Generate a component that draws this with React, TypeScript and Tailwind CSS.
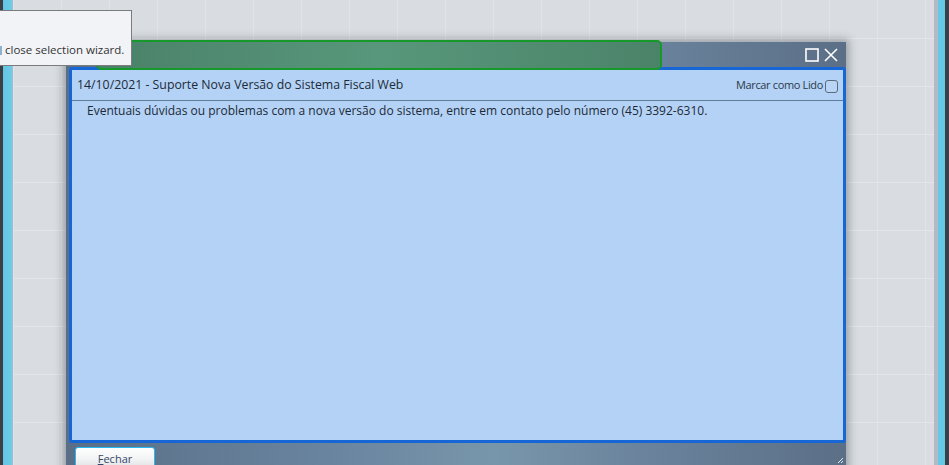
import React from "react";

function TitleIcons() {
  return (
    <div className="flex items-center gap-[5px] pr-[8px]">
      <svg width="14" height="14" viewBox="0 0 14 14" fill="none">
        <rect x="1" y="1" width="12" height="12" stroke="#ffffff" strokeWidth="1.6" />
      </svg>
      <svg width="14" height="14" viewBox="0 0 14 14" fill="none">
        <path d="M1 1 L13 13 M13 1 L1 13" stroke="#ffffff" strokeWidth="1.6" />
      </svg>
    </div>
  );
}

function ResizeGrip() {
  return (
    <svg className="absolute right-[2px] bottom-[1px]" width="8" height="8" viewBox="0 0 8 8">
      <path d="M7 2 L2 7 M7 5 L5 7" stroke="#e8eef4" strokeWidth="1" />
    </svg>
  );
}

export default function App() {
  return (
    <div className="relative w-[949px] h-[465px] overflow-hidden flex font-['Open_Sans','Noto_Sans',sans-serif]">
      {/* left edge */}
      <div className="w-[3px] h-full bg-[#3c4044]" />
      <div className="w-[10px] h-full bg-[linear-gradient(90deg,#62c4e4,#6ccbe8_80%,#a9bcc8)]" />

      {/* canvas */}
      <div className="flex-1 h-full bg-[#d9dde1] bg-[linear-gradient(#e3e6e9_1px,transparent_1px),linear-gradient(90deg,#e1e4e7_1px,transparent_1px)] bg-[size:48px_48px] bg-[position:0_38px]" />

      {/* right edge */}
      <div className="w-[4px] h-full bg-[#b2bbc3]" />
      <div className="w-[7px] h-full bg-[#66c9e8]" />
      <div className="w-[4px] h-full bg-[#3c4044]" />

      {/* dialog window */}
      <div className="absolute left-[66px] top-[42px] w-[780px] h-[440px] flex flex-col bg-[linear-gradient(90deg,#5a6f87,#6a85a0_35%,#7896ab_55%,#6a829c_75%,#5b6f87)] shadow-[0_0_8px_3px_rgba(40,50,60,0.35)]">
        {/* title bar */}
        <div className="relative h-[25px] flex items-center justify-end">
          <div className="absolute left-[30px] top-[-2px] w-[566px] h-[30px] rounded-[5px] border-2 border-[#16992a] bg-[linear-gradient(90deg,#4a8168,#58977b_50%,#4b8369)] z-10" />
          <TitleIcons />
        </div>

        {/* content panel */}
        <div className="ml-[3px] w-[777px] h-[376px] rounded-[3px] border-[3px] border-[#1766d6] bg-[#b4d2f5] flex flex-col">
          <div className="h-[31px] flex items-center justify-between pl-[5px] pr-[5px] border-b border-[#5d7d9b] text-[12.3px] text-[#1c2a38]">
            <span>14/10/2021 - Suporte Nova Versão do Sistema Fiscal Web</span>
            <label className="flex items-center gap-[2px] text-[11px] tracking-[-0.35px] text-[#2a3a4c]">
              <span>Marcar como Lido</span>
              <span className="w-[13px] h-[13px] mt-[3px] rounded-[3px] border border-[#5a6b7c] bg-[#b9d5f5]" />
            </label>
          </div>
          <p className="pl-[15px] pt-[2px] text-[12px] leading-[16px] text-[#1c2a38]">
            Eventuais dúvidas ou problemas com a nova versão do sistema, entre em contato pelo número (45) 3392-6310.
          </p>
        </div>

        {/* bottom bar */}
        <div className="relative flex-1 pl-[9px] pt-[2px]">
          <button className="w-[80px] h-[24px] rounded-[3px] border-[1.5px] border-[#28b9f0] bg-[linear-gradient(#ffffff,#f2f3f4_50%,#dcdee0)] text-[11px] text-[#34486a]">
            <span className="underline">F</span>echar
          </button>
        </div>
      </div>

      {/* resize grip */}
      <div className="absolute left-[836px] top-[455px] w-[10px] h-[10px]">
        <ResizeGrip />
      </div>

      {/* tooltip */}
      <div className="absolute left-[-1px] top-[10px] w-[133px] h-[56px] bg-[#f2f3f7] border border-[#7a7b7d] flex items-end pb-[7px] z-20">
        <span className="w-[2px] h-[9px] bg-[#8fb0d0] mr-[3px] mb-[3px]" />
        <span className="text-[11.5px] leading-[16px] text-[#333333]">close selection wizard.</span>
      </div>
    </div>
  );
}
